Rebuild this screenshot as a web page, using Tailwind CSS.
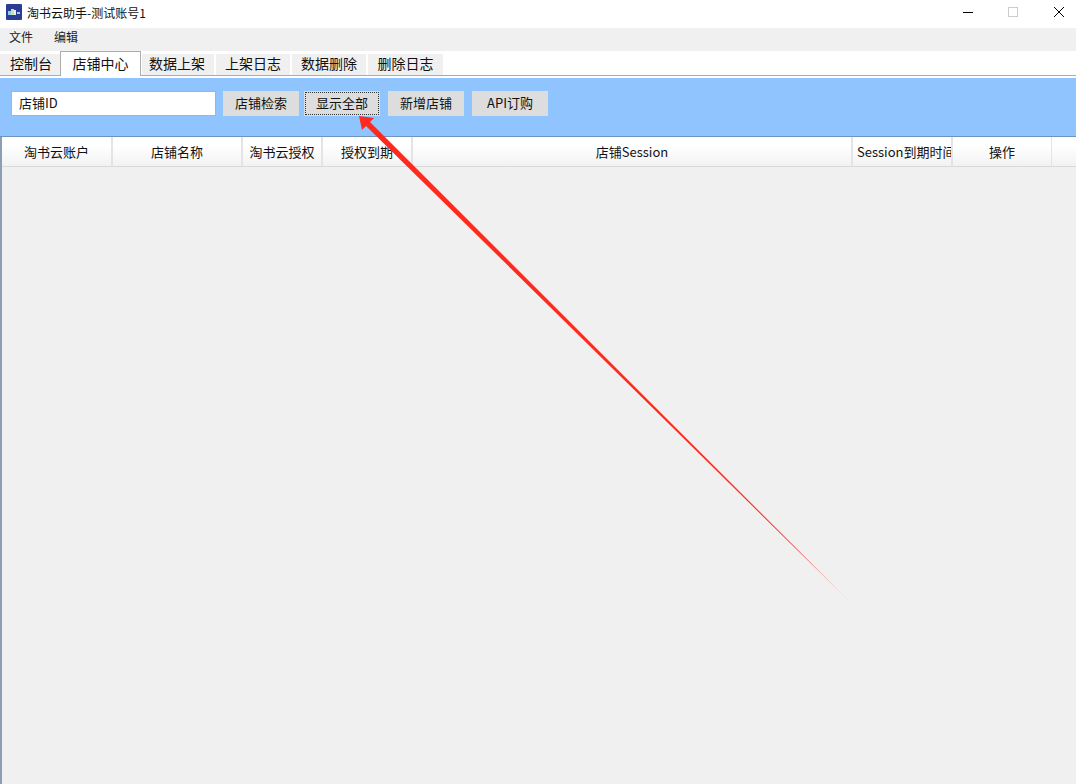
<!DOCTYPE html>
<html lang="zh-CN">
<head>
    <meta charset="UTF-8">
    <title>淘书云助手-测试账号1</title>
    <script src="https://cdn.jsdelivr.net/npm/@tailwindcss/browser@4"></script>
</head>
<body class="bg-white">
    <div class="relative w-[1076px] h-[784px] overflow-hidden flex flex-col bg-white text-[#111] font-['Noto_Sans_CJK_SC','Noto_Sans',sans-serif]">
        <!-- Title bar -->
        <div class="h-[28px] shrink-0 flex items-center bg-white">
            <svg class="ml-[6px] mt-[-4px] w-[16px] h-[16px]" viewBox="0 0 16 16">
                <rect width="16" height="16" rx="1" fill="#2c3b96"/>
                <rect x="2" y="7" width="3" height="4" fill="#8fd0e0"/>
                <rect x="5" y="5" width="3" height="6" fill="#c9e3a8"/>
                <rect x="8" y="6" width="2" height="5" fill="#e8eef5"/>
                <rect x="11" y="8" width="3" height="2" fill="#b9c4e6"/>
            </svg>
            <span class="ml-[5px] mt-[-3px] text-[12px] leading-none">淘书云助手-测试账号1</span>
            <div class="ml-auto flex items-center h-full relative">
                <svg class="w-[113px] h-[28px]" viewBox="963 0 113 28" fill="none">
                    <path d="M963 12.5H973" stroke="#000"/>
                    <rect x="1008.5" y="7.5" width="9" height="9" stroke="#ccc"/>
                    <path d="M1054 7L1064 17M1064 7L1054 17" stroke="#000"/>
                </svg>
            </div>
        </div>

        <!-- Menu bar -->
        <div class="h-[23px] shrink-0 bg-[#f0f0f0] flex items-center pl-[9px] pb-[5px] gap-[21px] text-[12px] text-[#222]">
            <span>文件</span>
            <span>编辑</span>
        </div>

        <!-- Tabs -->
        <div class="h-[25px] shrink-0 flex items-end bg-white border-b border-[#acacac] text-[14px] leading-none">
            <div class="w-[60px] h-[21px] pl-[2px] pb-[3px] bg-[#f0f0f0] flex items-center justify-center">控制台</div>
            <div class="w-[81px] h-[25px] mb-[-1px] pb-[2px] bg-white border border-b-0 border-[#acacac] flex items-center justify-center">店铺中心</div>
            <div class="ml-[1px] w-[72px] h-[21px] pr-[2px] pb-[3px] bg-[#f0f0f0] flex items-center justify-center">数据上架</div>
            <div class="ml-[2px] w-[74px] h-[21px] pb-[3px] bg-[#f0f0f0] flex items-center justify-center">上架日志</div>
            <div class="ml-[2px] w-[74px] h-[21px] pb-[3px] bg-[#f0f0f0] flex items-center justify-center">数据删除</div>
            <div class="ml-[2px] w-[75px] h-[21px] pb-[3px] bg-[#f0f0f0] flex items-center justify-center">删除日志</div>
        </div>

        <!-- Main area -->
        <div class="flex-1 flex flex-col mt-[2px] bg-[#f0f0f0]">
            <!-- Toolbar -->
            <div class="h-[59px] shrink-0 bg-[#90c4ff] border-b border-[#6f93bd] flex items-start pt-[13px] pl-[11px] text-[13px] leading-none">
                <div class="w-[205px] h-[25px] pb-[3px] bg-white border border-[#a9b4c2] flex items-center pl-[7px]">店铺ID</div>
                <button class="ml-[7px] w-[76px] h-[25px] pb-[3px] bg-[#dddddd]">店铺检索</button>
                <button class="ml-[5px] w-[76px] h-[25px] pb-[3px] bg-[#dddddd] outline-1 outline-dotted outline-[#333] -outline-offset-2">显示全部</button>
                <button class="ml-[8px] w-[76px] h-[25px] pb-[3px] bg-[#dddddd]">新增店铺</button>
                <button class="ml-[8px] w-[76px] h-[25px] pb-[3px] bg-[#dddddd]">API订购</button>
            </div>

            <!-- Table -->
            <div class="flex-1 border-l-2 border-l-[#8d9db2]">
                <div class="h-[30px] flex bg-gradient-to-b from-white from-30% to-[#f1f2f4] border-b border-[#d9d9d9] text-[13px] leading-none">
                    <div class="w-[111px] shrink-0 flex items-center justify-center border-r-2 border-[#e4e4e4]">淘书云账户</div>
                    <div class="w-[130px] shrink-0 flex items-center justify-center border-r-2 border-[#e4e4e4]">店铺名称</div>
                    <div class="w-[80px] shrink-0 flex items-center justify-center border-r-2 border-[#e4e4e4]">淘书云授权</div>
                    <div class="w-[90px] shrink-0 flex items-center justify-center border-r-2 border-[#e4e4e4]">授权到期</div>
                    <div class="w-[440px] shrink-0 flex items-center justify-center border-r-2 border-[#e4e4e4]">店铺Session</div>
                    <div class="w-[100px] shrink-0 flex items-center pl-[4px] overflow-hidden whitespace-nowrap border-r-2 border-[#e4e4e4]">Session到期时间</div>
                    <div class="w-[99px] shrink-0 flex items-center justify-center border-r border-[#e4e4e4]">操作</div>
                </div>
            </div>
        </div>

        <!-- Red annotation arrow over the window -->
        <svg class="absolute inset-0 w-[1076px] h-[784px] pointer-events-none" viewBox="0 0 1076 784">
            <defs>
                <linearGradient id="tail" gradientUnits="userSpaceOnUse" x1="359" y1="116" x2="848" y2="600">
                    <stop offset="0" stop-color="#ff2a1c"/>
                    <stop offset="0.9" stop-color="#ff2a1c"/>
                    <stop offset="1" stop-color="#ff9a92"/>
                </linearGradient>
            </defs>
            <polygon fill="url(#tail)" points="359,116 374,118 370,122 848,600 366,126 362,130"/>
        </svg>
    </div>
</body>
</html>
